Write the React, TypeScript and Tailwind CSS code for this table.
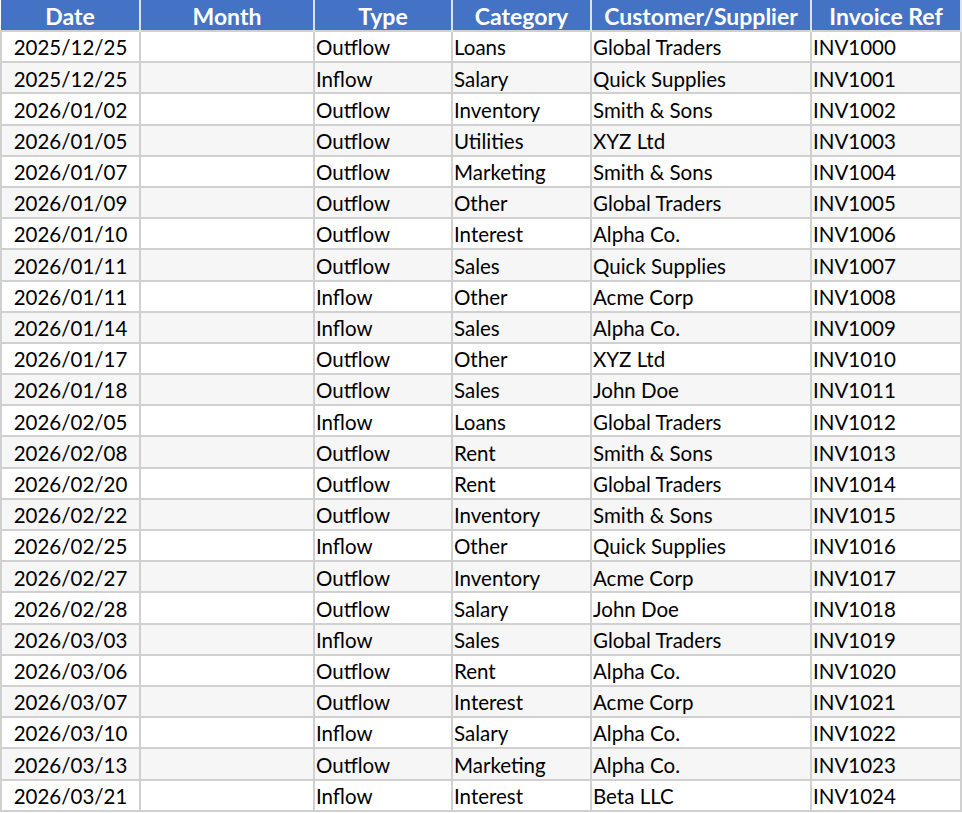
const columns = [
  { label: "Date", width: "w-[139px]" },
  { label: "Month", width: "w-[174px]" },
  { label: "Type", width: "w-[138px]" },
  { label: "Category", width: "w-[139px]" },
  { label: "Customer/Supplier", width: "w-[220px]" },
  { label: "Invoice Ref", width: "w-[150px]" },
];

const rows: [string, string, string, string][] = [
  ["2025/12/25", "Outflow", "Loans", "Global Traders"],
  ["2025/12/25", "Inflow", "Salary", "Quick Supplies"],
  ["2026/01/02", "Outflow", "Inventory", "Smith & Sons"],
  ["2026/01/05", "Outflow", "Utilities", "XYZ Ltd"],
  ["2026/01/07", "Outflow", "Marketing", "Smith & Sons"],
  ["2026/01/09", "Outflow", "Other", "Global Traders"],
  ["2026/01/10", "Outflow", "Interest", "Alpha Co."],
  ["2026/01/11", "Outflow", "Sales", "Quick Supplies"],
  ["2026/01/11", "Inflow", "Other", "Acme Corp"],
  ["2026/01/14", "Inflow", "Sales", "Alpha Co."],
  ["2026/01/17", "Outflow", "Other", "XYZ Ltd"],
  ["2026/01/18", "Outflow", "Sales", "John Doe"],
  ["2026/02/05", "Inflow", "Loans", "Global Traders"],
  ["2026/02/08", "Outflow", "Rent", "Smith & Sons"],
  ["2026/02/20", "Outflow", "Rent", "Global Traders"],
  ["2026/02/22", "Outflow", "Inventory", "Smith & Sons"],
  ["2026/02/25", "Inflow", "Other", "Quick Supplies"],
  ["2026/02/27", "Outflow", "Inventory", "Acme Corp"],
  ["2026/02/28", "Outflow", "Salary", "John Doe"],
  ["2026/03/03", "Inflow", "Sales", "Global Traders"],
  ["2026/03/06", "Outflow", "Rent", "Alpha Co."],
  ["2026/03/07", "Outflow", "Interest", "Acme Corp"],
  ["2026/03/10", "Inflow", "Salary", "Alpha Co."],
  ["2026/03/13", "Outflow", "Marketing", "Alpha Co."],
  ["2026/03/21", "Inflow", "Interest", "Beta LLC"],
];

export default function App() {
  return (
    <div className="w-[962px] h-[813px] bg-white overflow-hidden" style={{ fontFamily: "Lato, 'Liberation Sans', sans-serif" }}>
      <table className="border-collapse table-fixed w-[961px] text-[20.5px] text-black">
        <thead>
          <tr className="h-[31px]">
            {columns.map((c) => (
              <th
                key={c.label}
                className={`${c.width} bg-[#4472c4] text-white text-[23px] font-bold text-center px-0 pt-[2px] pb-0 leading-none border-x-2 border-x-[#dbe3f3] first:border-l-0`}
              >
                {c.label}
              </th>
            ))}
          </tr>
        </thead>
        <tbody>
          {rows.map((r, i) => (
            <tr key={i} className={`h-[31.2px] ${i % 2 === 1 ? "bg-[#f6f6f6]" : "bg-white"}`}>
              <td className="border-2 border-[#d0d0d0] text-center px-0 pt-[2px] pb-0 leading-none">{r[0]}</td>
              <td className="border-2 border-[#d0d0d0] p-0"></td>
              <td className="border-2 border-[#d0d0d0] px-[1px] pt-[2px] pb-0 leading-none">{r[1]}</td>
              <td className="border-2 border-[#d0d0d0] px-[1px] pt-[2px] pb-0 leading-none">{r[2]}</td>
              <td className="border-2 border-[#d0d0d0] px-[1px] pt-[2px] pb-0 leading-none">{r[3]}</td>
              <td className="border-2 border-[#d0d0d0] px-[1px] pt-[2px] pb-0 leading-none">INV{1000 + i}</td>
            </tr>
          ))}
        </tbody>
      </table>
    </div>
  );
}
